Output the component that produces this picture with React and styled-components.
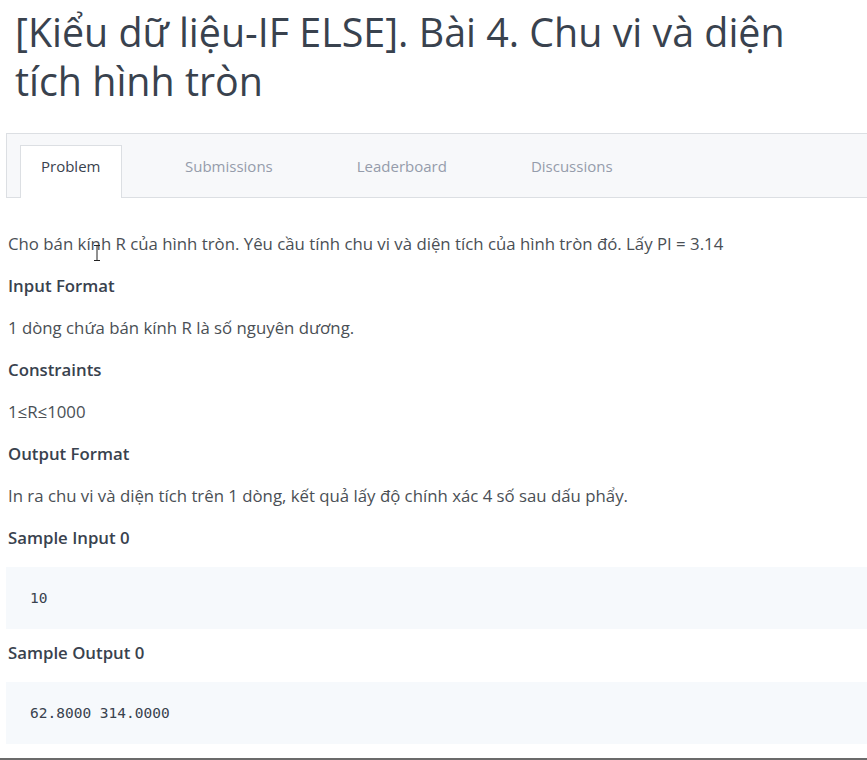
import React from 'react';
import styled, { createGlobalStyle } from 'styled-components';

const GlobalStyle = createGlobalStyle`
  html, body {
    margin: 0;
    padding: 0;
    background: #ffffff;
  }
  body {
    font-family: "Open Sans", "Noto Sans", sans-serif;
    overflow: hidden;
  }
`;

const Page = styled.div`
  position: relative;
  min-height: 760px;
  box-sizing: border-box;
  border-bottom: 2px solid #6b6b6b;
  overflow: hidden;
`;

const Title = styled.h1`
  max-width: 790px;
  margin: 8px 0 0 15px;
  font-size: 39.4px;
  line-height: 49px;
  font-weight: 500;
  color: #39424e;
`;

const TabBar = styled.div`
  margin: 27px 0 0 6px;
  height: 63px;
  display: flex;
  align-items: flex-end;
  gap: 42px;
  padding-left: 13px;
  background: #f7f8fa;
  border-top: 1px solid #dcdfe3;
  border-bottom: 1px solid #dcdfe3;
  border-left: 1px solid #dcdfe3;
`;

const Tab = styled.div`
  height: 53px;
  padding: 10px 20px 0;
  box-sizing: border-box;
  font-size: 15px;
  line-height: 20px;
  color: ${(props) => (props.active ? '#39424e' : '#959cab')};
  background: ${(props) => (props.active ? '#ffffff' : 'transparent')};
  border: 1px solid ${(props) => (props.active ? '#dcdfe3' : 'transparent')};
  border-bottom: none;
  margin-bottom: -1px;
  width: ${(props) => (props.active ? '102px' : 'auto')};
`;

const Content = styled.div`
  padding: 35px 0 0 8px;
  display: flex;
  flex-direction: column;
`;

const Text = styled.p`
  margin: 0 0 20px;
  font-size: 16.8px;
  line-height: 22px;
  color: #4a4f55;
`;

const Heading = styled.h4`
  margin: 0 0 20px;
  font-size: 16.8px;
  line-height: 22px;
  font-weight: 600;
  color: #39424e;
`;

const CodeBlock = styled.pre`
  margin: -2px 0 13px -2px;
  height: 62px;
  padding: 0 0 0 24px;
  display: flex;
  align-items: center;
  background: #f6f9fc;
  font-family: "DejaVu Sans Mono", "Liberation Mono", monospace;
  font-size: 14.5px;
  color: #39424e;
`;

const Cursor = styled.svg`
  position: absolute;
  left: 93px;
  top: 245px;
`;

const tabs = ['Problem', 'Submissions', 'Leaderboard', 'Discussions'];

const App = () => {
  return (
    <Page>
      <GlobalStyle />
      <Title>[Kiểu dữ liệu-IF ELSE]. Bài 4. Chu vi và diện tích hình tròn</Title>
      <TabBar>
        {tabs.map((t, i) => (
          <Tab key={t} active={i === 0}>{t}</Tab>
        ))}
      </TabBar>
      <Content>
        <Text>Cho bán kính R của hình tròn. Yêu cầu tính chu vi và diện tích của hình tròn đó. Lấy PI = 3.14</Text>
        <Heading>Input Format</Heading>
        <Text>1 dòng chứa bán kính R là số nguyên dương.</Text>
        <Heading>Constraints</Heading>
        <Text>1≤R≤1000</Text>
        <Heading>Output Format</Heading>
        <Text>In ra chu vi và diện tích trên 1 dòng, kết quả lấy độ chính xác 4 số sau dấu phẩy.</Text>
        <Heading>Sample Input 0</Heading>
        <CodeBlock>10</CodeBlock>
        <Heading>Sample Output 0</Heading>
        <CodeBlock>62.8000 314.0000</CodeBlock>
      </Content>
      <Cursor width="8" height="16" viewBox="0 0 8 16">
        <path d="M1 0.5h6M4 0.5v15M1 15.5h6" stroke="#222" strokeWidth="1" fill="none" />
      </Cursor>
    </Page>
  );
};

export default App;
